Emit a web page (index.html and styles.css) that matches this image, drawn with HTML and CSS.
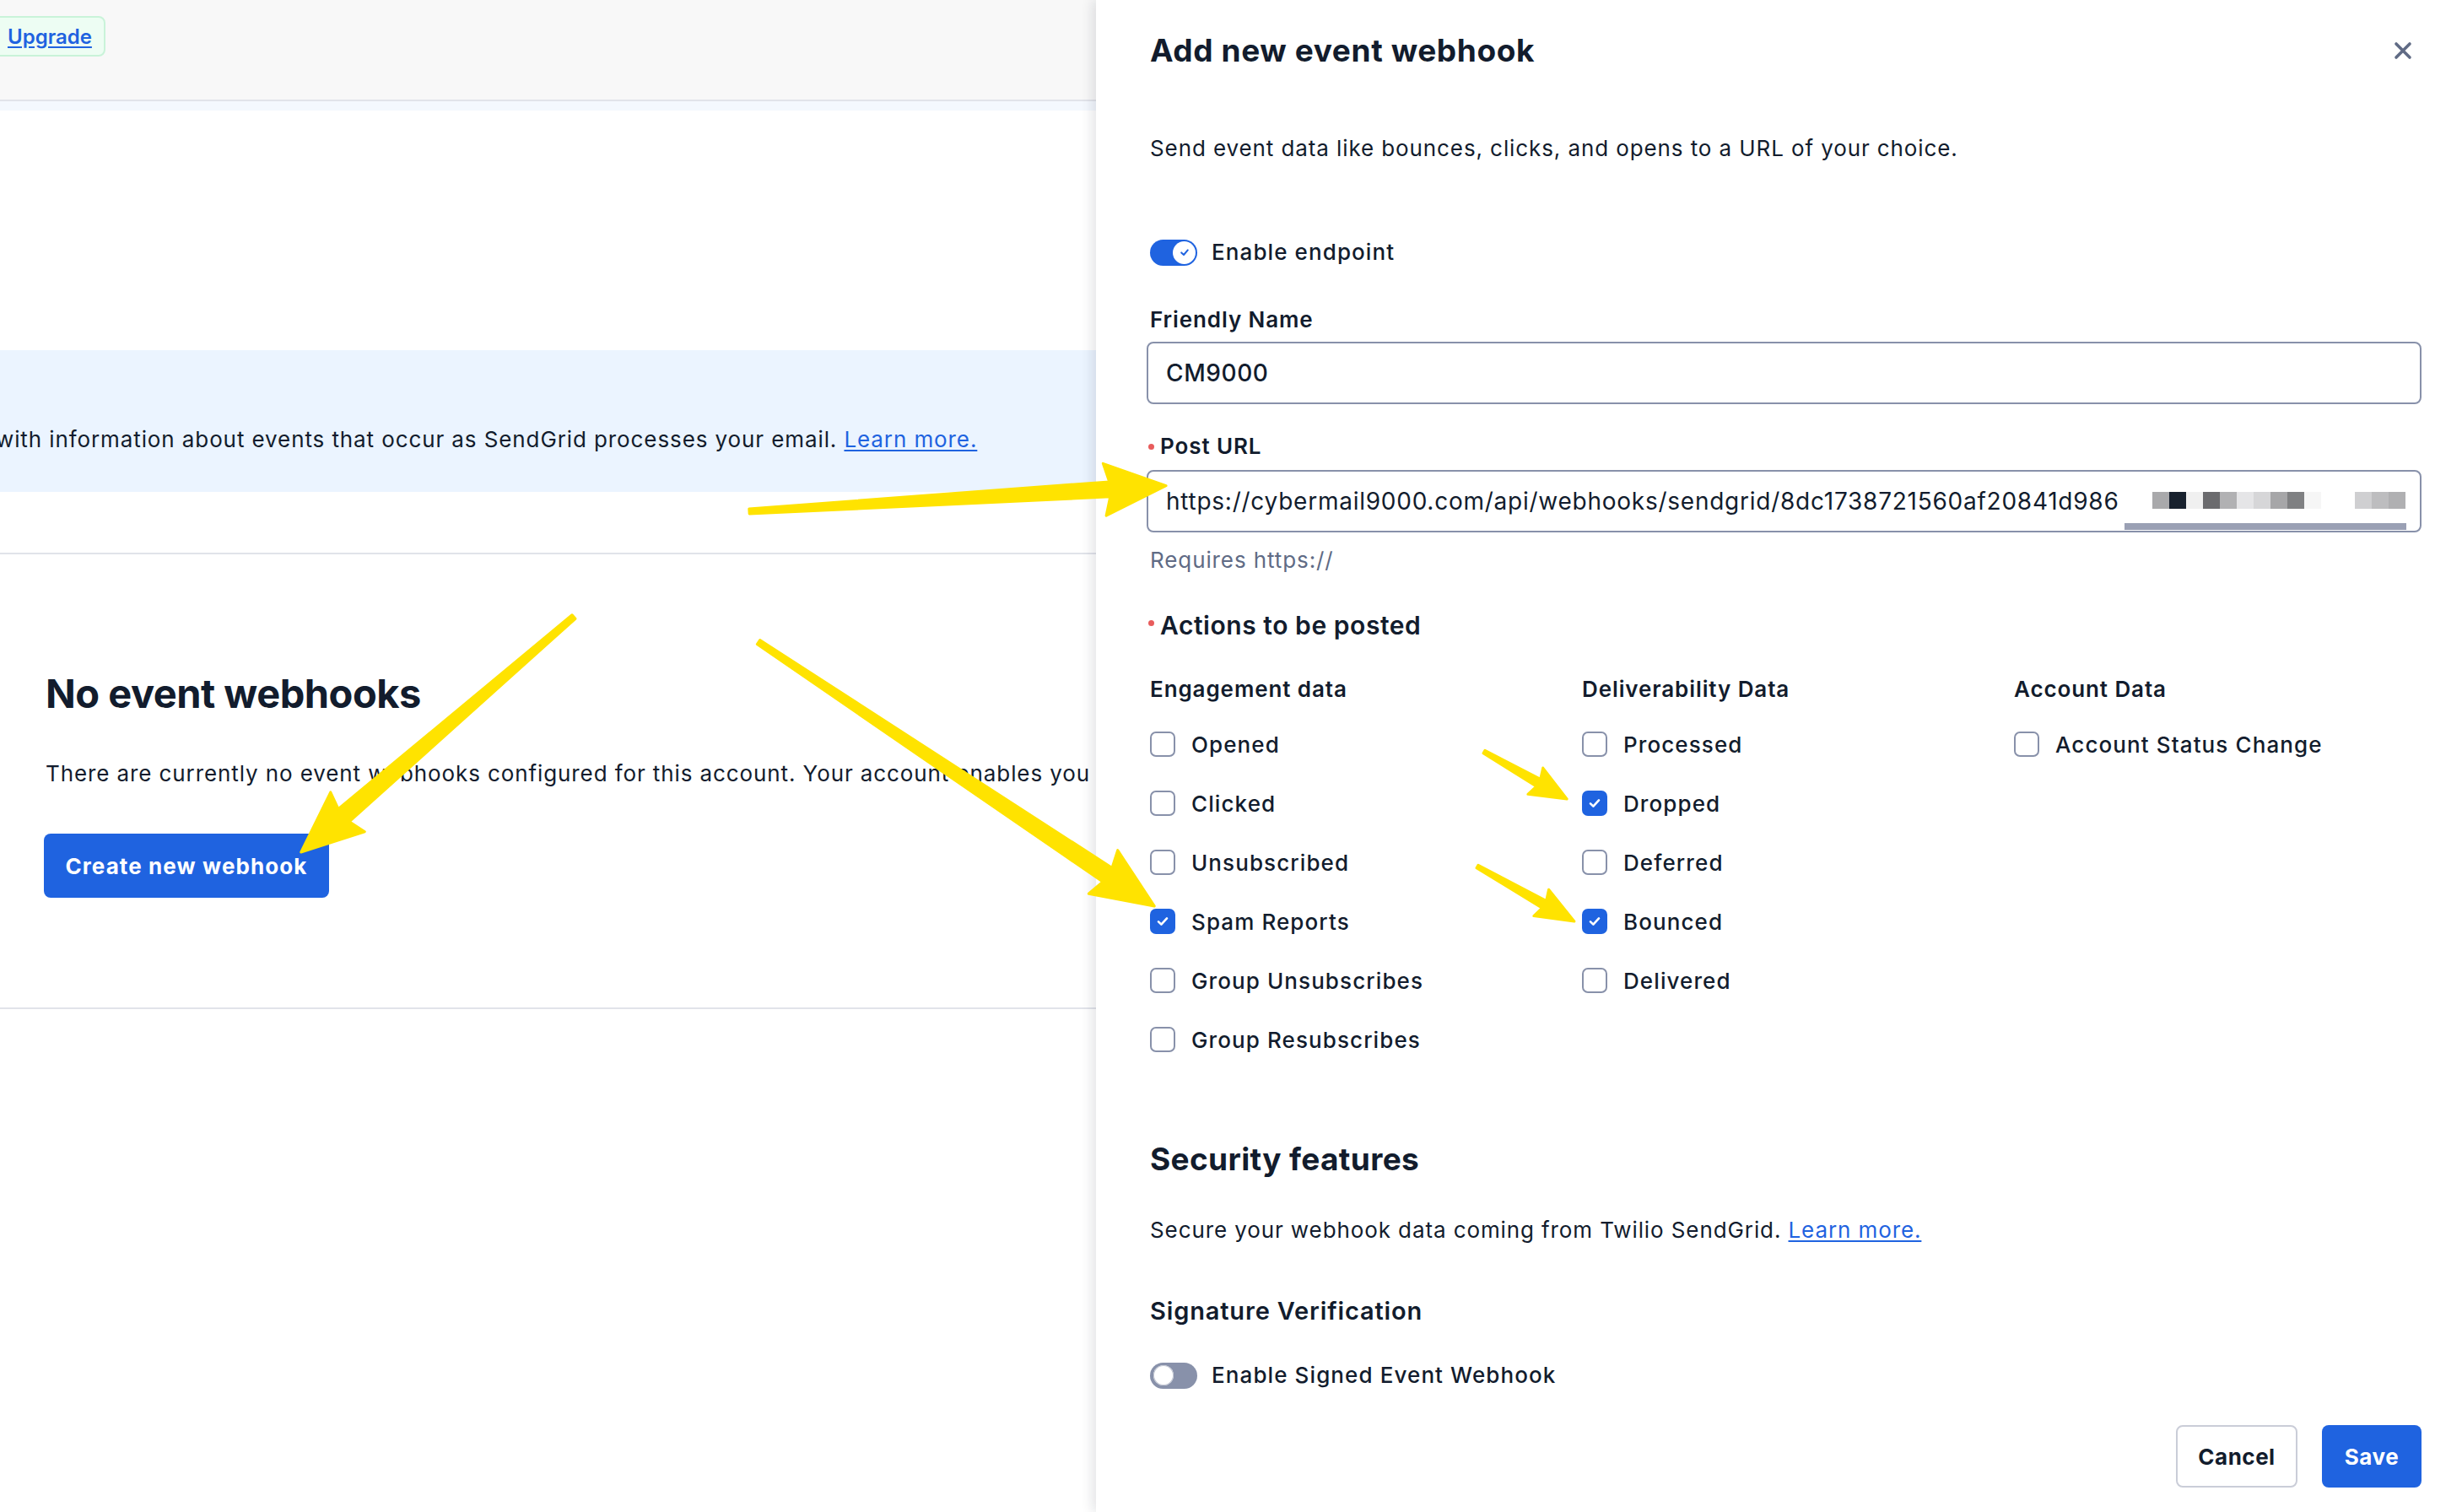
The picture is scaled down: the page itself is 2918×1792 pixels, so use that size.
FILE: index.html
```html
<!DOCTYPE html>
<html>
<head>
  <meta charset="utf-8">
  <link rel="stylesheet" href="styles.css">
</head>
<body>
  <div class="app">
    <div class="topbar">
      <div class="upgrade-badge"><a href="#">Upgrade</a></div>
    </div>
    <div class="topbar-band"></div>

    <div class="info-banner">
      <p>with information about events that occur as SendGrid processes your email. <a href="#">Learn more.</a></p>
    </div>

    <div class="empty-state">
      <h2>No event webhooks</h2>
      <p>There are currently no event webhooks configured for this account. Your account enables you to add more.</p>
      <button class="primary-button">Create new webhook</button>
    </div>
  </div>

  <aside class="sheet">
    <div class="sheet-header">
      <h1>Add new event webhook</h1>
      <button class="close-button" type="button">
        <svg width="22" height="22" viewBox="0 0 22 22"><path d="M3 3 L19 19 M19 3 L3 19" stroke="#606b85" stroke-width="3.6" stroke-linecap="round"/></svg>
      </button>
    </div>

    <p class="sheet-desc">Send event data like bounces, clicks, and opens to a URL of your choice.</p>

    <div class="toggle-row">
      <span class="toggle on"><span class="knob">
        <svg width="14" height="14" viewBox="0 0 14 14"><path d="M3.2 7.4 L6 10 L10.8 4.4" fill="none" stroke="#1f63e0" stroke-width="2" stroke-linecap="round" stroke-linejoin="round"/></svg>
      </span></span>
      <span class="toggle-label">Enable endpoint</span>
    </div>

    <div class="field friendly-name">
      <label>Friendly Name</label>
      <div class="text-input">CM9000</div>
    </div>

    <div class="field post-url">
      <label class="required">Post URL</label>
      <div class="text-input url-input">
        <span class="url-text">https://cybermail9000.com/api/webhooks/sendgrid/8dc1738721560af20841d986</span>
        <span class="mosaic">
          <i style="background:#a9a9ab"></i><i style="background:#18212e"></i><i style="background:#f0f0f0"></i><i style="background:#6b6b6e"></i><i style="background:#b1b1b3"></i><i style="background:#e5e5e7"></i><i style="background:#d6d6d8"></i><i style="background:#a6a6a8"></i><i style="background:#7f8082"></i><i style="background:#f6f6f6"></i><i></i><i></i><i style="background:#cfcfd1"></i><i style="background:#bdbdbf"></i><i style="background:#b0b0b2"></i>
        </span>
        <span class="scroll-thumb"></span>
      </div>
      <p class="help-text">Requires https://</p>
    </div>

    <h3 class="actions-title required">Actions to be posted</h3>

    <div class="actions-grid">
      <div class="action-column">
        <h4>Engagement data</h4>
        <label class="check"><span class="box"></span>Opened</label>
        <label class="check"><span class="box"></span>Clicked</label>
        <label class="check"><span class="box"></span>Unsubscribed</label>
        <label class="check"><span class="box checked"><svg width="20" height="20" viewBox="0 0 20 20"><path d="M5 10.4 L8.4 13.6 L15 6.4" fill="none" stroke="#fff" stroke-width="2.6" stroke-linecap="round" stroke-linejoin="round"/></svg></span>Spam Reports</label>
        <label class="check"><span class="box"></span>Group Unsubscribes</label>
        <label class="check"><span class="box"></span>Group Resubscribes</label>
      </div>
      <div class="action-column">
        <h4>Deliverability Data</h4>
        <label class="check"><span class="box"></span>Processed</label>
        <label class="check"><span class="box checked"><svg width="20" height="20" viewBox="0 0 20 20"><path d="M5 10.4 L8.4 13.6 L15 6.4" fill="none" stroke="#fff" stroke-width="2.6" stroke-linecap="round" stroke-linejoin="round"/></svg></span>Dropped</label>
        <label class="check"><span class="box"></span>Deferred</label>
        <label class="check"><span class="box checked"><svg width="20" height="20" viewBox="0 0 20 20"><path d="M5 10.4 L8.4 13.6 L15 6.4" fill="none" stroke="#fff" stroke-width="2.6" stroke-linecap="round" stroke-linejoin="round"/></svg></span>Bounced</label>
        <label class="check"><span class="box"></span>Delivered</label>
      </div>
      <div class="action-column">
        <h4>Account Data</h4>
        <label class="check"><span class="box"></span>Account Status Change</label>
      </div>
    </div>

    <h2 class="security-title">Security features</h2>
    <p class="security-desc">Secure your webhook data coming from Twilio SendGrid. <a href="#">Learn more.</a></p>

    <h3 class="signature-title">Signature Verification</h3>
    <div class="toggle-row signed-row">
      <span class="toggle off"><span class="knob"></span></span>
      <span class="toggle-label">Enable Signed Event Webhook</span>
    </div>

    <div class="sheet-footer">
      <button class="secondary-button">Cancel</button>
      <button class="save-button">Save</button>
    </div>
  </aside>

  <!-- callout arrows drawn on top of the page -->
  <svg class="callouts" width="2918" height="1792" viewBox="0 0 2918 1792">
    <g fill="#ffe300" stroke="#ffe300" stroke-width="3" stroke-linejoin="round">
      <g transform="translate(888 606) rotate(-3.5)">
        <polygon points="0,-3 428,-9 422,-31 495,0 422,31 428,9 0,3"/>
      </g>
      <g transform="translate(680 731) rotate(139.2)">
        <polygon points="0,-3 360,-10 354,-31 427,0 354,31 360,10 0,3"/>
      </g>
      <g transform="translate(899 761) rotate(33.7)">
        <polygon points="0,-3 497,-10 491,-31 564,0 491,31 497,10 0,3"/>
      </g>
      <g transform="translate(1759 891) rotate(29.7)">
        <polygon points="0,-2 74,-5 70,-18 113,0 70,18 74,5 0,2"/>
      </g>
      <g transform="translate(1751 1027) rotate(29.5)">
        <polygon points="0,-2 91,-5 87,-18 132,0 87,18 91,5 0,2"/>
      </g>
    </g>
  </svg>
</body>
</html>
```

FILE: styles.css
```css
* {
  box-sizing: border-box;
}

body {
  margin: 0;
  width: 2918px;
  height: 1792px;
  overflow: hidden;
  position: relative;
  font-family: Inter, "Noto Sans", sans-serif;
  letter-spacing: 0.9px;
  color: #121c2d;
  background: #fff;
}

h1, h2, h3, h4, p {
  margin: 0;
}

a {
  color: #1f63e0;
  text-decoration: underline;
  text-underline-offset: 3px;
}

/* page behind the sheet */

.app {
  width: 2918px;
}

.topbar {
  height: 120px;
  background: #f8f8f8;
  border-bottom: 2px solid #e1e3ea;
  padding-top: 19px;
}

.upgrade-badge {
  width: 146px;
  height: 48px;
  margin-left: -21px;
  padding-left: 28px;
  display: flex;
  align-items: center;
  background: #edfdf3;
  border: 2px solid #c9f3d9;
  border-radius: 8px;
  font-size: 24px;
  font-weight: 600;
  letter-spacing: 0;
}

.topbar-band {
  height: 11px;
  background: #f4f8fe;
}

.info-banner {
  margin-top: 284px;
  height: 168px;
  padding-top: 88px;
  background: #ebf4ff;
  font-size: 26px;
  line-height: 36px;
  white-space: nowrap;
}

.info-banner p {
  margin-left: -5px;
}

.empty-state {
  margin-top: 72px;
  border-top: 2px solid #e1e3ea;
  border-bottom: 2px solid #e1e3ea;
  padding: 135px 54px 130px;
  white-space: nowrap;
}

.empty-state h2 {
  font-size: 47px;
  line-height: 60px;
  font-weight: 700;
  letter-spacing: -0.5px;
}

.empty-state p {
  margin-top: 47px;
  font-size: 26px;
  line-height: 36px;
}

.primary-button {
  margin-top: 53px;
  margin-left: -2px;
  width: 338px;
  height: 76px;
  border: none;
  border-radius: 8px;
  background: #1f63e0;
  color: #fff;
  font-family: inherit;
  font-size: 26px;
  font-weight: 700;
  letter-spacing: 1.1px;
}

/* side sheet */

.sheet {
  position: absolute;
  top: 0;
  right: 0;
  width: 1619px;
  height: 1792px;
  background: #fff;
  box-shadow: -4px 0 14px rgba(18, 28, 45, 0.12);
  padding: 36px 48px 0 64px;
}

.sheet-header {
  display: flex;
  justify-content: space-between;
  align-items: center;
  height: 48px;
}

.sheet-header h1 {
  font-size: 37px;
  line-height: 48px;
  font-weight: 700;
  letter-spacing: 0.6px;
}

.close-button {
  border: none;
  background: none;
  padding: 0;
  margin-right: 11px;
  width: 22px;
  height: 22px;
  display: flex;
}

.sheet-desc {
  margin-top: 74px;
  font-size: 26px;
  line-height: 36px;
}

.toggle-row {
  margin-top: 87px;
  height: 36px;
  display: flex;
  align-items: center;
  gap: 17px;
}

.toggle {
  width: 56px;
  height: 31px;
  border-radius: 16px;
  display: flex;
  align-items: center;
  padding: 0 2px;
}

.toggle.on {
  background: #1f63e0;
  justify-content: flex-end;
}

.toggle.off {
  background: #8891aa;
}

.knob {
  width: 27px;
  height: 27px;
  border-radius: 50%;
  background: #fff;
  display: flex;
  align-items: center;
  justify-content: center;
}

.toggle.off .knob {
  width: 24px;
  height: 24px;
  margin-left: 2px;
  box-shadow: inset 0 0 0 1px #c4c8d4;
}

.toggle-label {
  font-size: 26px;
  line-height: 36px;
  font-weight: 500;
  letter-spacing: 1.1px;
}

.field label {
  display: block;
  font-size: 26px;
  line-height: 36px;
  font-weight: 600;
}

.friendly-name {
  margin-top: 44px;
}

.post-url {
  margin-top: 32px;
}

.required {
  position: relative;
  padding-left: 14px;
}

.required::before {
  content: "";
  position: absolute;
  left: 0;
  top: 50%;
  width: 7px;
  height: 7px;
  margin-top: -3px;
  border-radius: 50%;
  background: #e85c5c;
}

.field .required {
  margin-left: -2px;
}

.text-input {
  margin-top: 8px;
  margin-left: -4px;
  height: 74px;
  border: 2px solid #8891aa;
  border-radius: 8px;
  padding: 0 21px;
  display: flex;
  align-items: center;
  font-size: 28px;
  font-weight: 500;
  letter-spacing: 0.6px;
}

.url-input {
  position: relative;
  font-weight: 400;
  letter-spacing: 0.75px;
  margin-top: 10px;
}

.url-text {
  width: 1134px;
  overflow: hidden;
  white-space: nowrap;
  flex: none;
}

.mosaic {
  display: flex;
  margin-left: 35px;
  margin-top: -2px;
}

.mosaic i {
  width: 20px;
  height: 20px;
}

.scroll-thumb {
  position: absolute;
  left: 1157px;
  right: 16px;
  bottom: 1px;
  height: 8px;
  background: #9aa0b4;
}

.help-text {
  margin-top: 15px;
  font-size: 26px;
  line-height: 36px;
  color: #606b85;
}

.actions-title {
  margin-top: 39px;
  margin-left: -2px;
  font-size: 30px;
  line-height: 40px;
  font-weight: 600;
  letter-spacing: 0.55px;
}

.actions-title.required::before {
  margin-top: -6px;
}

.actions-grid {
  margin-top: 38px;
  display: grid;
  grid-template-columns: 512px 512px 1fr;
}

.action-column {
  display: flex;
  flex-direction: column;
  gap: 34px;
}

.action-column h4 {
  font-size: 26px;
  line-height: 36px;
  font-weight: 600;
  margin-bottom: -5px;
}

.check {
  display: flex;
  align-items: center;
  gap: 19px;
  height: 36px;
  font-size: 26px;
  font-weight: 500;
  letter-spacing: 1.1px;
}

.box {
  width: 30px;
  height: 30px;
  border: 2px solid #8891aa;
  border-radius: 7px;
  display: flex;
  align-items: center;
  justify-content: center;
  flex: none;
}

.box.checked {
  background: #1f63e0;
  border-color: #1f63e0;
}

.security-title {
  margin-top: 100px;
  font-size: 37px;
  line-height: 48px;
  font-weight: 700;
  letter-spacing: 0.35px;
}

.security-desc {
  margin-top: 42px;
  font-size: 26px;
  line-height: 36px;
}

.signature-title {
  margin-top: 58px;
  font-size: 29px;
  line-height: 40px;
  font-weight: 600;
  letter-spacing: 0.85px;
}

.signed-row {
  margin-top: 38px;
}

.sheet-footer {
  margin-top: 41px;
  display: flex;
  justify-content: flex-end;
  gap: 29px;
}

.sheet-footer button {
  height: 74px;
  border-radius: 8px;
  font-family: inherit;
  font-size: 26px;
  font-weight: 700;
  letter-spacing: 0.5px;
}

.secondary-button {
  width: 144px;
  background: #fff;
  border: 2px solid #cacdd8;
  color: #121c2d;
}

.save-button {
  width: 118px;
  background: #1f63e0;
  border: none;
  color: #fff;
}

.callouts {
  position: absolute;
  top: 0;
  left: 0;
  pointer-events: none;
}
```
